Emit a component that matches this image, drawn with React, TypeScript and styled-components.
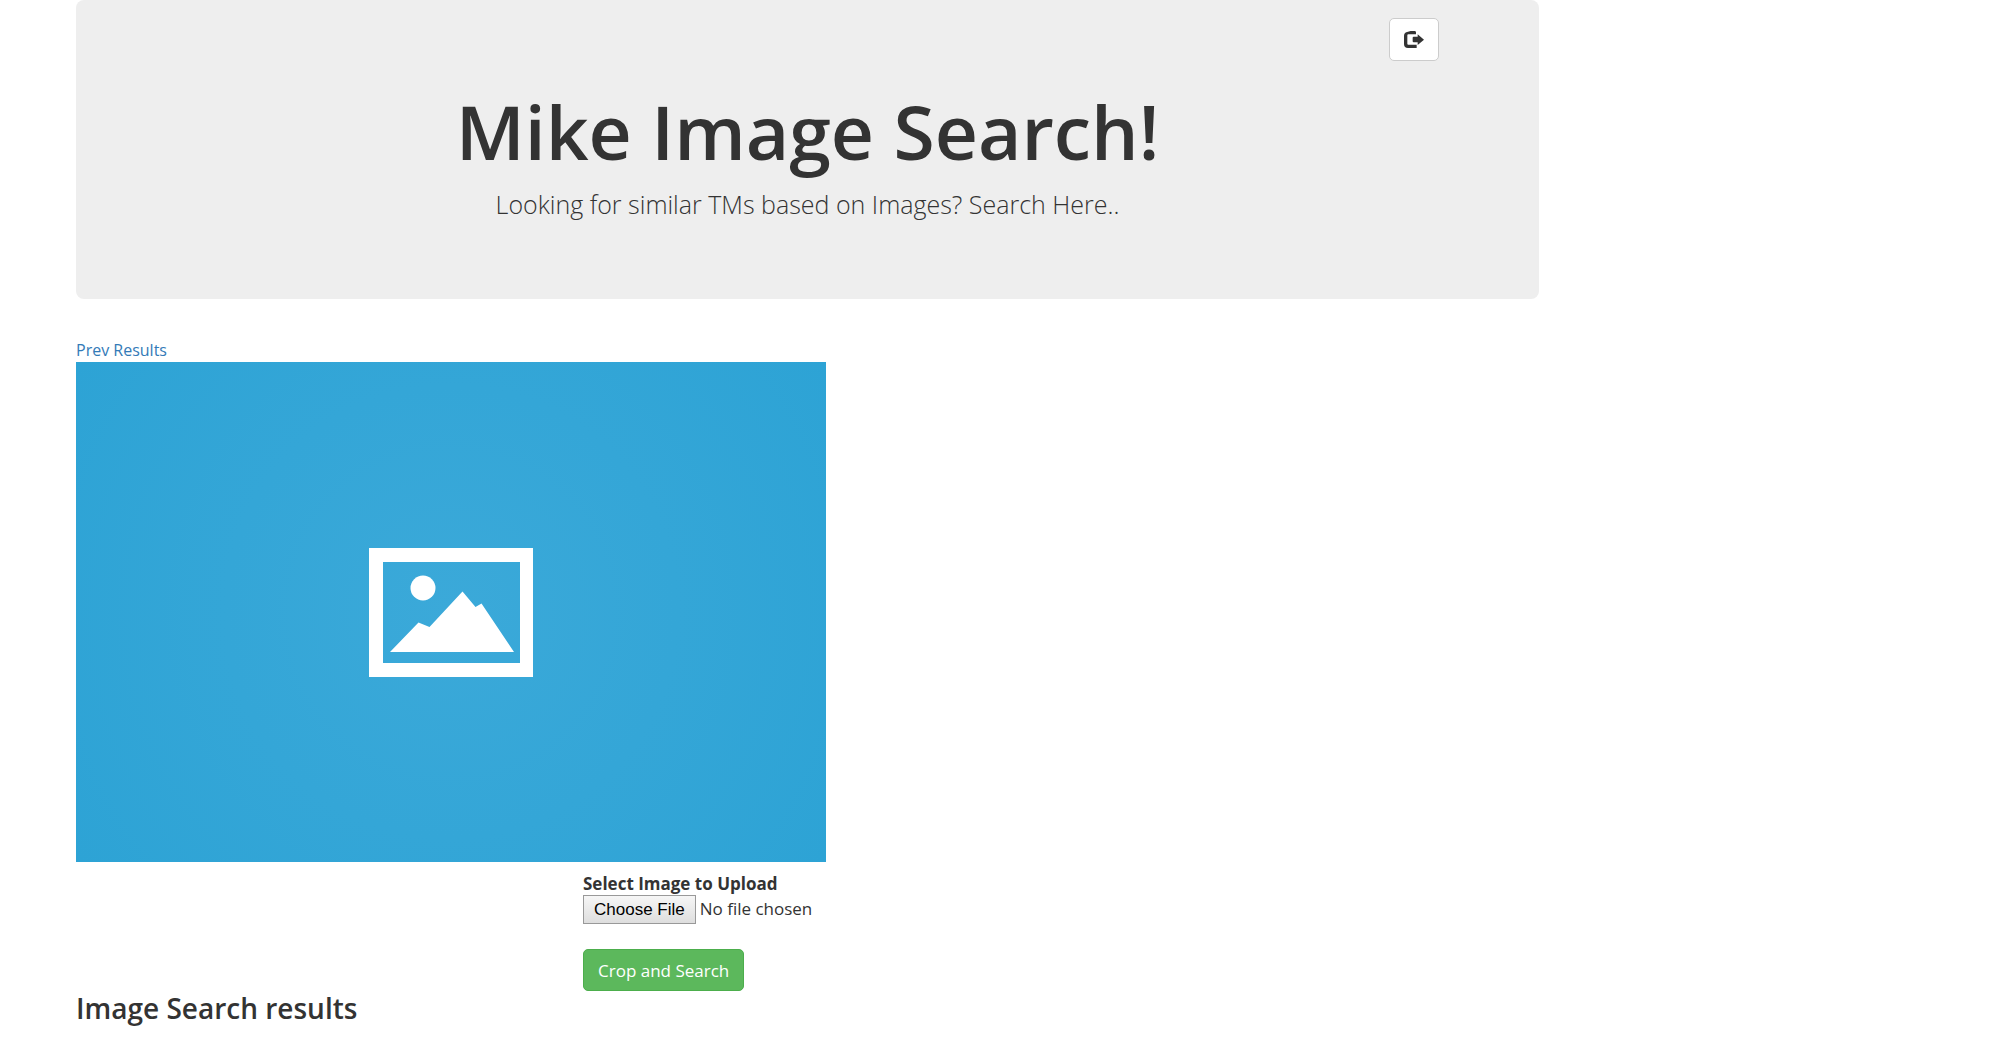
import React from 'react';
import styled, { createGlobalStyle } from 'styled-components';

const GlobalStyle = createGlobalStyle`
  *, *::before, *::after { box-sizing: border-box; }
  body {
    margin: 0;
    background: #fff;
    color: #333;
    font-family: 'Open Sans', 'Noto Sans', sans-serif;
    font-size: 17px;
    line-height: 23px;
  }
`;

const Container = styled.main`
  max-width: 1539px;
  min-height: 100vh;
  padding-left: 76px;
`;

const Jumbotron = styled.header`
  display: flex;
  flex-direction: column;
  padding: 18px 100px 78px;
  margin-bottom: 40px;
  border-radius: 8px;
  background: #eee;
  text-align: center;
`;

const Title = styled.h1`
  margin: 28px 0 14px;
  font-size: 75px;
  font-weight: 600;
  line-height: 84px;
`;

const Lead = styled.p`
  margin: 0;
  font-size: 25px;
  font-weight: 300;
  line-height: 34px;
`;

const Button = styled.button<{ $variant: 'default' | 'success' }>`
  height: 42px;
  padding: 0 14px;
  border: 1px solid ${(p) => (p.$variant === 'success' ? '#4cae4c' : '#ccc')};
  border-radius: 5px;
  background: ${(p) => (p.$variant === 'success' ? '#5cb85c' : '#fff')};
  color: ${(p) => (p.$variant === 'success' ? '#fff' : '#333')};
  font: inherit;
  cursor: pointer;
`;

const LogoutButton = styled(Button)`
  display: flex;
  align-items: center;
  align-self: flex-end;
  height: 43px;
`;

const Workspace = styled.section`
  display: flex;
  flex-direction: column;
  max-width: 750px;
`;

const PrevLink = styled.a`
  align-self: flex-start;
  color: #337ab7;
  font-size: 16px;
  text-decoration: none;
`;

const Preview = styled.div`
  display: flex;
  align-items: center;
  justify-content: center;
  aspect-ratio: 3 / 2;
  background: radial-gradient(circle, #3ba9d9 0%, #2da3d5 100%);
`;

const UploadForm = styled.form`
  display: flex;
  flex-direction: column;
  align-items: flex-start;
  align-self: flex-end;
  width: 243px;
  padding-top: 10px;
`;

const Label = styled.label`
  font-weight: 700;
`;

const FileInput = styled.input`
  width: 100%;
  margin-bottom: 25px;
  font: inherit;
  line-height: 27px;

  &::file-selector-button {
    height: 29px;
    margin: 0 4px 0 0;
    padding: 0 10px;
    border: 1px solid #999;
    border-radius: 0;
    background: linear-gradient(#f6f6f6, #dedede);
    color: #000;
    font-family: 'Liberation Sans', Arial, sans-serif;
    font-size: 17px;
    vertical-align: top;
  }
`;

const ResultsTitle = styled.h2`
  margin: 0;
  font-size: 28px;
  font-weight: 600;
  line-height: 34px;
`;

const LogoutIcon = () => (
  <svg width="20" height="17" viewBox="0 0 60 51" aria-hidden="true">
    <path fill="#333" d="M20 0H34Q37 2 36 10H13Q10 10 10 13V38Q10 41 13 41H38V51H12Q0 51 0 39V14Q0 4 12 2Z" />
    <path fill="#333" d="M29 17H41V10L60 26L41 42V34H29Q26 34 26 31V20Q26 17 29 17Z" />
  </svg>
);

const PictureIcon = () => (
  <svg width="164" height="129" viewBox="0 0 164 129" role="img" aria-label="Image placeholder">
    <path fill="#fff" fillRule="evenodd" d="M0 0H164V129H0ZM14 14V115H151V14Z" />
    <circle cx="54" cy="40" r="12.5" fill="#fff" />
    <path fill="#fff" d="M21 104L49.500 74.500L60.500 79L93.500 43.500L106.500 59L112.500 55.500L145 104Z" />
  </svg>
);

export default function App() {
  return (
    <>
      <GlobalStyle />
      <Container>
        <Jumbotron>
          <LogoutButton type="button" $variant="default" aria-label="Log out">
            <LogoutIcon />
          </LogoutButton>
          <Title>Mike Image Search!</Title>
          <Lead>Looking for similar TMs based on Images? Search Here..</Lead>
        </Jumbotron>
        <Workspace>
          <PrevLink href="#results">Prev Results</PrevLink>
          <Preview>
            <PictureIcon />
          </Preview>
          <UploadForm onSubmit={(e) => e.preventDefault()}>
            <Label htmlFor="image">Select Image to Upload</Label>
            <FileInput id="image" type="file" accept="image/*" />
            <Button type="submit" $variant="success">Crop and Search</Button>
          </UploadForm>
        </Workspace>
        <ResultsTitle id="results">Image Search results</ResultsTitle>
      </Container>
    </>
  );
}
